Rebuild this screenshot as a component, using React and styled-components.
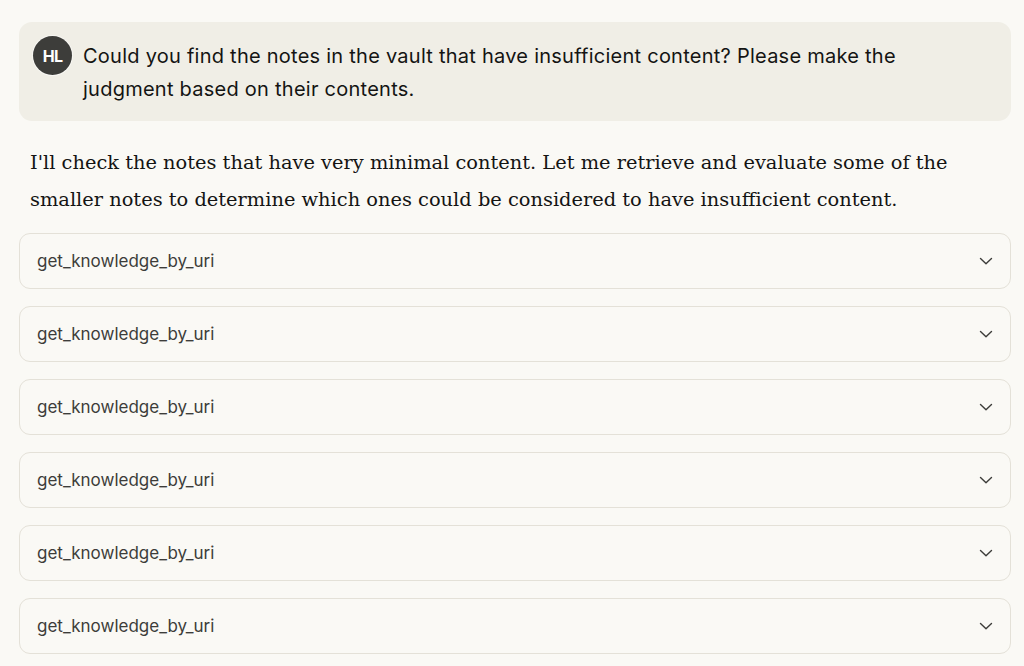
import React from 'react';
import styled, { createGlobalStyle } from 'styled-components';

const Global = createGlobalStyle`
  html, body {
    margin: 0;
    padding: 0;
    background: #faf9f5;
  }
`;

const Page = styled.div`
  padding: 22px 13px 0 19px;
  display: flex;
  flex-direction: column;
  height: 666px;
  overflow: hidden;
  box-sizing: border-box;
`;

const UserBubble = styled.div`
  display: flex;
  align-items: flex-start;
  gap: 11px;
  background: #f0eee6;
  border-radius: 13px;
  padding: 14px 40px 15px 14px;
`;

const Avatar = styled.div`
  flex: none;
  width: 39px;
  height: 39px;
  border-radius: 50%;
  background: #3d3d3a;
  box-shadow: 0 0 0 1px rgba(255, 255, 255, 0.55);
  color: #ffffff;
  font-family: 'Inter', sans-serif;
  font-weight: 700;
  font-size: 16px;
  letter-spacing: -0.8px;
  display: flex;
  align-items: center;
  justify-content: center;
`;

const UserText = styled.p`
  margin: 4px 0 0;
  font-family: 'Inter', sans-serif;
  font-size: 20px;
  letter-spacing: 0.25px;
  line-height: 33px;
  color: #141413;
`;

const Reply = styled.p`
  margin: 23px 20px 15px 11px;
  font-family: 'DejaVu Serif', serif;
  font-size: 19.4px;
  line-height: 37px;
  color: #141413;
`;

const ToolList = styled.div`
  display: flex;
  flex-direction: column;
  gap: 17px;
`;

const ToolCard = styled.div`
  flex: none;
  height: 56px;
  box-sizing: border-box;
  border: 1px solid #e4e1d8;
  border-radius: 11px;
  background: #faf9f5;
  display: flex;
  align-items: center;
  justify-content: space-between;
  padding: 0 16px 0 17px;
`;

const ToolName = styled.span`
  font-family: 'Inter', sans-serif;
  font-size: 17px;
  font-weight: 400;
  color: #3d3d3a;
`;

const Chevron = () => (
  <svg width="16" height="16" viewBox="0 0 16 16" fill="none">
    <path d="M2.5 5.5L8 10.8l5.5-5.3" stroke="#3d3d3a" strokeWidth="1.4" strokeLinecap="round" strokeLinejoin="round" />
  </svg>
);

export default function App() {
  const tools = Array.from({ length: 6 }, () => 'get_knowledge_by_uri');
  return (
    <>
      <Global />
      <Page>
        <UserBubble>
          <Avatar>HL</Avatar>
          <UserText>
            Could you find the notes in the vault that have insufficient content? Please make the
            judgment based on their contents.
          </UserText>
        </UserBubble>
        <Reply>
          I'll check the notes that have very minimal content. Let me retrieve and evaluate some of the
          smaller notes to determine which ones could be considered to have insufficient content.
        </Reply>
        <ToolList>
          {tools.map((name, i) => (
            <ToolCard key={i}>
              <ToolName>{name}</ToolName>
              <Chevron />
            </ToolCard>
          ))}
        </ToolList>
      </Page>
    </>
  );
}
